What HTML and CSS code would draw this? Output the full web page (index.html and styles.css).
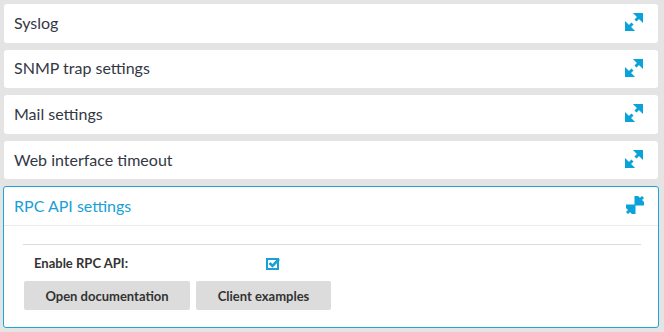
FILE: index.html
```html
<!DOCTYPE html>
<html>
<head>
<meta charset="utf-8">
<link rel="stylesheet" href="styles.css">
</head>
<body>
<div class="list">
  <div class="panel">
    <div class="head"><span class="title">Syslog</span>
      <svg class="icon" viewBox="0 0 18 18"><polygon points="10,0 18,0 18,8" /><line x1="16" y1="2" x2="10.5" y2="7.5"/><polygon points="0,10 0,18 8,18"/><line x1="2" y1="16" x2="7.5" y2="10.5"/></svg>
    </div>
  </div>
  <div class="panel">
    <div class="head"><span class="title">SNMP trap settings</span>
      <svg class="icon" viewBox="0 0 18 18"><polygon points="10,0 18,0 18,8" /><line x1="16" y1="2" x2="10.5" y2="7.5"/><polygon points="0,10 0,18 8,18"/><line x1="2" y1="16" x2="7.5" y2="10.5"/></svg>
    </div>
  </div>
  <div class="panel">
    <div class="head"><span class="title">Mail settings</span>
      <svg class="icon" viewBox="0 0 18 18"><polygon points="10,0 18,0 18,8" /><line x1="16" y1="2" x2="10.5" y2="7.5"/><polygon points="0,10 0,18 8,18"/><line x1="2" y1="16" x2="7.5" y2="10.5"/></svg>
    </div>
  </div>
  <div class="panel">
    <div class="head"><span class="title">Web interface timeout</span>
      <svg class="icon" viewBox="0 0 18 18"><polygon points="10,0 18,0 18,8" /><line x1="16" y1="2" x2="10.5" y2="7.5"/><polygon points="0,10 0,18 8,18"/><line x1="2" y1="16" x2="7.5" y2="10.5"/></svg>
    </div>
  </div>
  <div class="panel open">
    <div class="head"><span class="title">RPC API settings</span>
      <svg class="icon" viewBox="0 0 18 18"><polygon points="10,0 10,8 18,8"/><line x1="17" y1="1" x2="12" y2="6"/><polygon points="8,10 0,10 8,18"/><line x1="1" y1="17" x2="6" y2="12"/></svg>
    </div>
    <div class="body">
      <div class="rule"></div>
      <div class="row">
        <span class="label">Enable RPC API:</span>
        <svg class="check" viewBox="0 0 14 13"><rect x="1" y="2" width="11" height="10" fill="none" stroke="#1aa0d6" stroke-width="2"/><polyline points="3.5,6 6.5,9 13,2" fill="none" stroke="#1aa0d6" stroke-width="2.6"/></svg>
      </div>
      <div class="buttons">
        <button class="btn doc">Open documentation</button>
        <button class="btn ex">Client examples</button>
      </div>
    </div>
  </div>
</div>
</body>
</html>
```

FILE: styles.css
```css
html, body {
  margin: 0;
  padding: 0;
  background: #e4e4e4;
  width: 664px;
  height: 332px;
  overflow: hidden;
}
body {
  font-family: Lato, "Liberation Sans", sans-serif;
}
.list {
  display: flex;
  flex-direction: column;
  gap: 7px;
  padding: 4px 6px 0 4px;
}
.panel {
  background: #fff;
  border-radius: 3px;
}
.head {
  height: 38.6px;
  display: flex;
  align-items: center;
  justify-content: space-between;
  padding: 0 15px 0 10px;
}
.title {
  font-size: 16px;
  color: #333845;
  margin-top: -2px;
}
.icon {
  width: 18px;
  height: 18px;
  fill: #0aa3d9;
  stroke: #0aa3d9;
  stroke-width: 3;
  margin-top: -2px;
}
.panel.open {
  border: 1px solid #19a6da;
  margin-left: -1px;
  margin-right: -1px;
}
.panel.open .head {
  padding-right: 14px;
  border-bottom: 1px solid #ececec;
  height: 38px;
}
.panel.open .title {
  color: #1aa0d6;
}
.body {
  padding: 18px 17px 17px 19px;
}
.rule {
  height: 1px;
  background: #dcdcdc;
}
.row {
  display: flex;
  align-items: center;
  height: 36px;
  padding-left: 11px;
}
.label {
  font-size: 13px;
  font-weight: bold;
  color: #333;
  width: 232px;
}
.check {
  width: 14px;
  height: 13px;
}
.buttons {
  display: flex;
  gap: 6px;
  padding-left: 1px;
}
.btn {
  border: 0;
  border-radius: 2px;
  background: #dcdcdc;
  font-family: Lato, "Liberation Sans", sans-serif;
  font-size: 13px;
  font-weight: bold;
  color: #333;
  height: 29px;
  padding: 0;
}
.doc { width: 166px; }
.ex { width: 135px; }
```
